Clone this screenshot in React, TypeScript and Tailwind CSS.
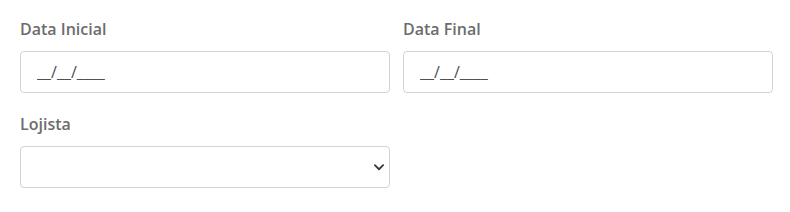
export default function App() {
  return (
    <div className="min-h-[212px] bg-white pl-[20px] pr-[17px] pt-[17px] font-['Open_Sans',sans-serif]">
      <div className="grid grid-cols-2 gap-x-[13px] gap-y-[19px]">
        <Field label="Data Inicial">
          <input
            placeholder="__/__/____"
            className="h-[42px] w-full rounded border border-[#ced4da] bg-white px-[16px] text-[16px] text-[#495057] outline-none placeholder:text-[#495057]"
          />
        </Field>
        <Field label="Data Final">
          <input
            placeholder="__/__/____"
            className="h-[42px] w-full rounded border border-[#ced4da] bg-white px-[16px] text-[16px] text-[#495057] outline-none placeholder:text-[#495057]"
          />
        </Field>
        <Field label="Lojista">
          <div className="relative">
            <select className="h-[42px] w-full appearance-none rounded border border-[#ced4da] bg-white px-[16px] text-[16px] text-[#495057] outline-none">
              <option></option>
            </select>
            <svg
              className="pointer-events-none absolute right-[5px] top-[15px] h-[12px] w-[12px]"
              viewBox="0 0 16 16"
              fill="none"
              stroke="#343a40"
              strokeWidth="2.4"
              strokeLinecap="round"
              strokeLinejoin="round"
            >
              <path d="M2.5 5.5l5.5 5.5 5.5-5.5" />
            </svg>
          </div>
        </Field>
      </div>
    </div>
  );
}

function Field({ label, children }: { label: string; children: React.ReactNode }) {
  return (
    <div>
      <label className="mb-[10px] block text-[16px] font-semibold leading-[24px] text-[#6c6c6c]">
        {label}
      </label>
      {children}
    </div>
  );
}
